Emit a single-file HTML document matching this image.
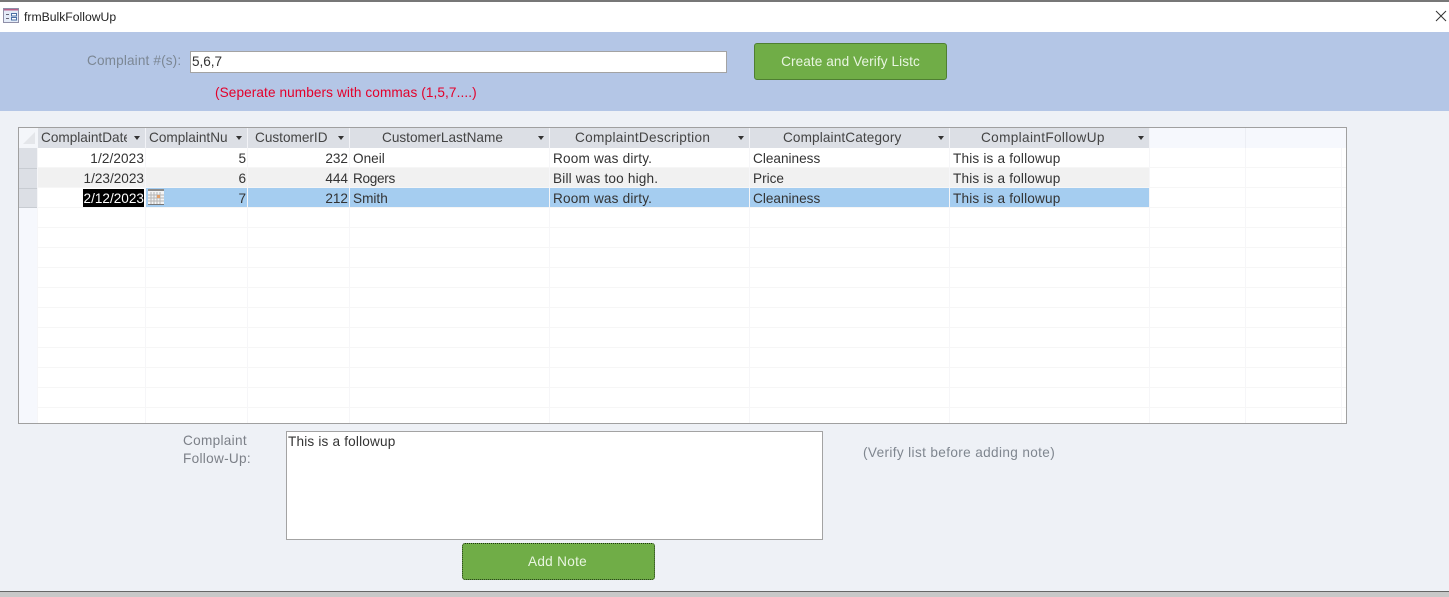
<!DOCTYPE html>
<html lang="en"><head><meta charset="utf-8"><title>frmBulkFollowUp</title>
<style>
html,body{margin:0;padding:0;width:1449px;height:597px;overflow:hidden;background:#c6c6c6}
body{position:relative;font-family:"Liberation Sans",sans-serif;font-size:13.6px;color:#333}
div,span{position:absolute;white-space:nowrap;box-sizing:border-box}
.t{line-height:20px;height:20px}
.g{letter-spacing:.18px}
.r{text-align:right}
.c{text-align:center}
.h{top:128px;height:20px;background:#dcdfe5;border-right:1px solid #f2f3f7;color:#444;line-height:19px}
.a{width:0;height:0;border-left:3px solid transparent;border-right:3px solid transparent;border-top:4px solid #333;top:136px}
.hl{left:38px;width:1308px;height:1px;background:#f6f6f6}
.vl{top:148px;width:1px;height:275px;background:#f6f6f8}
.sb{left:19px;width:19px;height:20px}
</style></head><body>
<div style="left:0;top:0;width:1449px;height:2px;background:#777"></div>
<div style="left:0;top:2px;width:1449px;height:30px;background:#fff"></div>
<svg style="position:absolute;left:3px;top:8px" width="16" height="15" viewBox="0 0 16 15"><rect x=".5" y=".5" width="15" height="14" fill="#e4ecf8" stroke="#8f8fa8"/><rect x="1" y="1" width="14" height="1.500" fill="#b8608a"/><path d="M3 6.500h3M3 10.500h3" stroke="#667" fill="none"/><rect x="8.500" y="5.500" width="5" height="2.500" fill="#fff" stroke="#4a6fa5"/><rect x="8.500" y="9.500" width="5" height="2.500" fill="#fff" stroke="#4a6fa5"/></svg>
<div class="t" style="left:24px;top:7px;font-size:12.200px;color:#222">frmBulkFollowUp</div>
<svg style="position:absolute;left:1435px;top:10px" width="12" height="12" viewBox="0 0 12 12"><path d="M1 1L11 11M11 1L1 11" stroke="#333" stroke-width="1" fill="none"/></svg>

<div style="left:0;top:32px;width:1449px;height:79px;background:#b4c6e6"></div>
<div style="left:0;top:111px;width:1449px;height:480px;background:#eef1f6"></div>
<div style="left:0;top:591px;width:1449px;height:1px;background:#666"></div>
<div style="left:0;top:592px;width:1449px;height:5px;background:#c8c8c8"></div>

<div class="t" style="left:87px;top:51px;color:#7c8794;letter-spacing:.14px">Complaint #(s):</div>
<div class="t" style="left:190px;top:51px;width:537px;height:22px;background:#fff;border:1px solid #a3a3a3;padding-left:1px;line-height:19px;letter-spacing:-.05px">5,6,7</div>
<div class="t" style="left:215px;top:83px;color:#e3002a;letter-spacing:.1px">(Seperate numbers with commas (1,5,7....)</div>
<div class="c" style="left:754px;top:43px;width:193px;height:37px;background:#70ad47;border:1px solid #4f7f32;border-radius:3px;color:#e8f5e0;line-height:35px;padding-right:0;letter-spacing:.09px">Create and Verify Listc</div>

<div style="left:18px;top:127px;width:1329px;height:297px;background:#fff;border:1px solid #a0a0a0"></div>
<div style="left:19px;top:128px;width:1327px;height:20px;background:#f6f8fd"></div>
<div style="left:19px;top:128px;width:19px;height:295px;background:#f6f8fd"></div>
<div style="left:19px;top:128px;width:19px;height:20px;background:#f4f6fa"></div>
<svg style="position:absolute;left:22px;top:131px" width="14" height="14"><path d="M1 13L13 1V13Z" fill="#e4e6ea"/></svg>
<div class="sb" style="top:148px;background:#dcdfe5"></div>
<div class="sb" style="top:168px;background:#dcdfe5;border-top:1px solid #c8ccd2"></div>
<div class="sb" style="top:188px;background:#dcdfe5;border-top:1px solid #c8ccd2;border-bottom:1px solid #c8ccd2"></div>

<div style="left:38px;top:168px;width:1112px;height:20px;background:#f1f1f1"></div>
<div style="left:146px;top:188px;width:1004px;height:20px;background:#a5cdf0"></div>

<div class="hl" style="top:167px"></div><div class="hl" style="top:187px"></div><div class="hl" style="top:207px"></div><div class="hl" style="top:227px"></div><div class="hl" style="top:247px"></div><div class="hl" style="top:267px"></div><div class="hl" style="top:287px"></div><div class="hl" style="top:307px"></div><div class="hl" style="top:327px"></div><div class="hl" style="top:347px"></div><div class="hl" style="top:367px"></div><div class="hl" style="top:387px"></div><div class="hl" style="top:407px"></div>
<div class="vl" style="left:37px"></div><div class="vl" style="left:145px"></div><div class="vl" style="left:247px"></div><div class="vl" style="left:349px"></div><div class="vl" style="left:549px"></div><div class="vl" style="left:749px"></div><div class="vl" style="left:949px"></div><div class="vl" style="left:1149px"></div><div class="vl" style="left:1245px"></div><div class="vl" style="left:1341px"></div>
<div style="left:1149px;top:128px;width:1px;height:20px;background:#eceef4"></div>
<div style="left:1245px;top:128px;width:1px;height:20px;background:#eceef4"></div>

<div class="h" style="left:38px;width:108px"><span style="left:3px;top:0;width:86px;height:19px;overflow:hidden">ComplaintDate</span></div><div class="a" style="left:134px"></div>
<div class="h" style="left:146px;width:102px;padding-left:3px;overflow:hidden"><span style="position:static">ComplaintNu</span></div><div class="a" style="left:236px"></div>
<div class="h" style="left:248px;width:102px;padding-left:7px">CustomerID</div><div class="a" style="left:338px"></div>
<div class="h" style="left:350px;width:200px;padding-left:32px">CustomerLastName</div><div class="a" style="left:538px"></div>
<div class="h" style="left:550px;width:200px;padding-left:25px;letter-spacing:.3px">ComplaintDescription</div><div class="a" style="left:738px"></div>
<div class="h" style="left:750px;width:200px;padding-left:33px;letter-spacing:.12px">ComplaintCategory</div><div class="a" style="left:938px"></div>
<div class="h" style="left:950px;width:200px;padding-left:31px;letter-spacing:.35px">ComplaintFollowUp</div><div class="a" style="left:1138px"></div>

<div class="t r" style="left:38px;width:106px;top:149px;letter-spacing:.1px">1/2/2023</div>
<div class="t r" style="left:146px;width:100px;top:149px">5</div>
<div class="t r" style="left:248px;width:100px;top:149px">232</div>
<div class="t" style="left:353px;top:149px">Oneil</div>
<div class="t g" style="left:553px;top:149px">Room was dirty.</div>
<div class="t" style="left:753px;top:149px">Cleaniness</div>
<div class="t g" style="left:953px;top:149px">This is a followup</div>

<div class="t r" style="left:38px;width:106px;top:169px">1/23/2023</div>
<div class="t r" style="left:146px;width:100px;top:169px">6</div>
<div class="t r" style="left:248px;width:100px;top:169px">444</div>
<div class="t" style="left:353px;top:169px;letter-spacing:-.3px">Rogers</div>
<div class="t g" style="left:553px;top:169px">Bill was too high.</div>
<div class="t" style="left:753px;top:169px">Price</div>
<div class="t g" style="left:953px;top:169px">This is a followup</div>

<div class="t r" style="left:83px;width:61px;top:189px;height:18px;line-height:19px;background:#000;color:#fff">2/12/2023</div>
<svg style="position:absolute;left:148px;top:189px" width="16" height="16" viewBox="0 0 16 16"><rect width="16" height="15" fill="#f4f4f4"/><rect x="0" y="0" width="16" height="2" fill="#8a8a8a"/><path d="M0 6h16M0 9h16M0 12h16M3 3v12M6 3v12M9 3v12M12 3v12" stroke="#b5b5b5" stroke-width="1"/><rect x="9" y="6" width="3" height="3" fill="#e2a06a"/><path d="M0 15.500h16" stroke="#777"/></svg>
<div class="t r" style="left:146px;width:100px;top:189px">7</div>
<div class="t r" style="left:248px;width:100px;top:189px">212</div>
<div class="t" style="left:353px;top:189px">Smith</div>
<div class="t g" style="left:553px;top:189px">Room was dirty.</div>
<div class="t" style="left:753px;top:189px">Cleaniness</div>
<div class="t g" style="left:953px;top:189px">This is a followup</div>

<div class="t" style="left:183px;top:431px;color:#7c8088;letter-spacing:.3px">Complaint</div>
<div class="t" style="left:183px;top:449px;color:#7c8088;letter-spacing:.3px">Follow-Up:</div>
<div class="g" style="left:286px;top:431px;width:537px;height:109px;background:#fff;border:1px solid #a3a3a3;padding:0 0 0 1px;line-height:19px">This is a followup</div>
<div class="t" style="left:863px;top:443px;color:#7f868f;letter-spacing:.36px">(Verify list before adding note)</div>
<div class="c" style="left:462px;top:543px;width:193px;height:37px;background:#70ad47;border:1px dotted #1d3312;border-radius:3px;color:#e8f5e0;line-height:35px;padding-right:2px;letter-spacing:.3px">Add Note</div>
</body></html>
